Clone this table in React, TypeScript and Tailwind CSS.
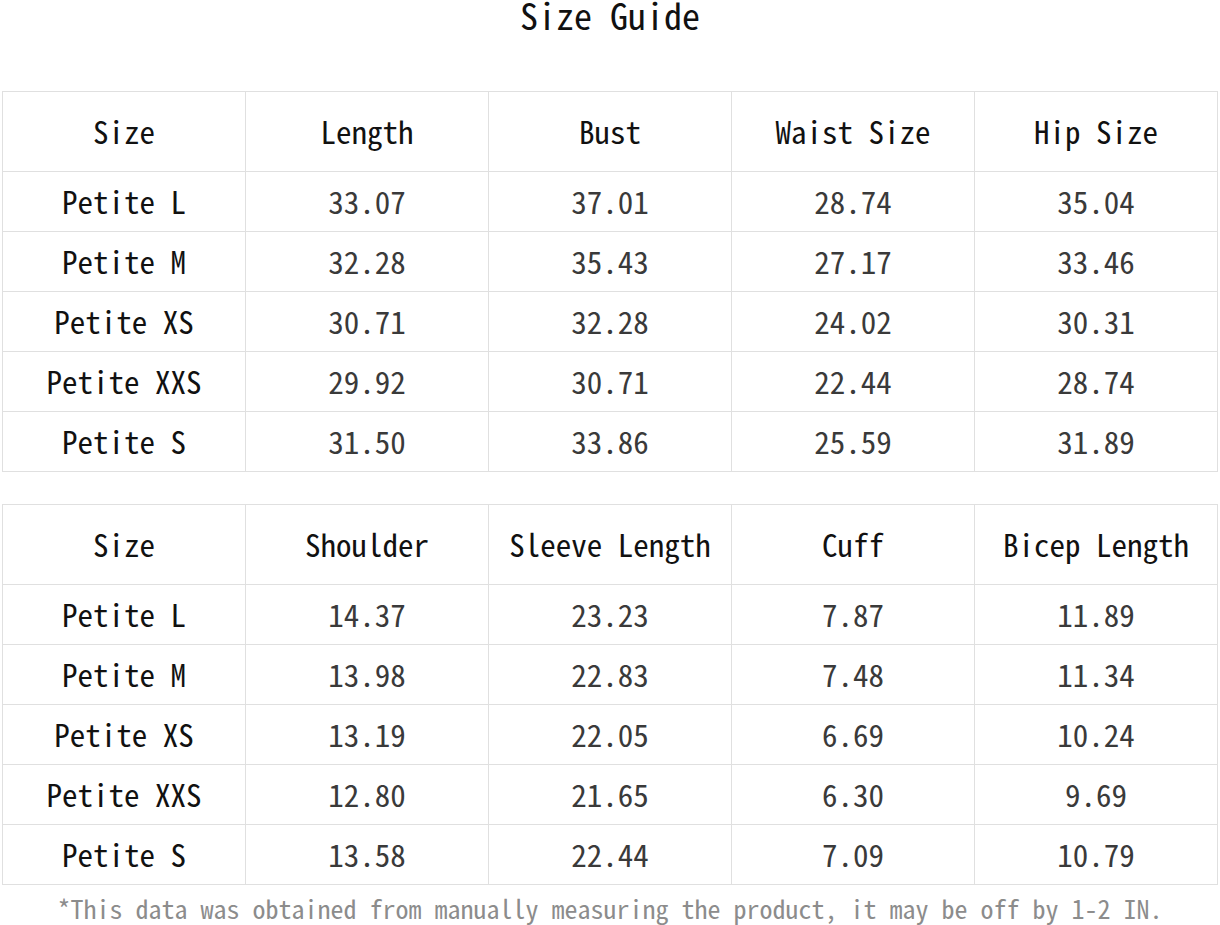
import React from 'react';

const font = { fontFamily: '"Noto Sans Mono CJK SC", "Liberation Mono", monospace' };

const measures = [
  {
    headers: ['Size', 'Length', 'Bust', 'Waist Size', 'Hip Size'],
    rows: [
      ['Petite L', '33.07', '37.01', '28.74', '35.04'],
      ['Petite M', '32.28', '35.43', '27.17', '33.46'],
      ['Petite XS', '30.71', '32.28', '24.02', '30.31'],
      ['Petite XXS', '29.92', '30.71', '22.44', '28.74'],
      ['Petite S', '31.50', '33.86', '25.59', '31.89'],
    ],
  },
  {
    headers: ['Size', 'Shoulder', 'Sleeve Length', 'Cuff', 'Bicep Length'],
    rows: [
      ['Petite L', '14.37', '23.23', '7.87', '11.89'],
      ['Petite M', '13.98', '22.83', '7.48', '11.34'],
      ['Petite XS', '13.19', '22.05', '6.69', '10.24'],
      ['Petite XXS', '12.80', '21.65', '6.30', '9.69'],
      ['Petite S', '13.58', '22.44', '7.09', '10.79'],
    ],
  },
];

const SizeTable: React.FC<{ headers: string[]; rows: string[][] }> = ({ headers, rows }) => (
  <table className="ml-[2px] w-[1216px] table-fixed border-collapse">
    <thead>
      <tr className="h-[80px]">
        {headers.map((h) => (
          <th key={h} className="border border-[#e0e0e0] text-center text-[31px] font-medium text-[#111111]">
            {h}
          </th>
        ))}
      </tr>
    </thead>
    <tbody>
      {rows.map((row) => (
        <tr key={row[0]} className="h-[60px]">
          {row.map((cell, i) => (
            <td
              key={i}
              className={`border border-[#e0e0e0] text-center text-[31px] ${
                i === 0 ? 'font-medium text-[#111111]' : 'font-normal text-[#3a3a3a]'
              }`}
            >
              {cell}
            </td>
          ))}
        </tr>
      ))}
    </tbody>
  </table>
);

export default function App() {
  return (
    <div className="w-[1220px] h-[925px] bg-white overflow-hidden" style={font}>
      <h1 className="h-[27px] pt-[1px] text-center text-[36px] leading-[26px] font-medium text-[#111111]">Size Guide</h1>
      <div className="mt-[64px]">
        <SizeTable headers={measures[0].headers} rows={measures[0].rows} />
      </div>
      <div className="mt-[32px]">
        <SizeTable headers={measures[1].headers} rows={measures[1].rows} />
      </div>
      <p className="mt-[10px] text-center text-[26px] leading-[26px] text-[#8c8c8c]">
        *This data was obtained from manually measuring the product, it may be off by 1-2 IN.
      </p>
    </div>
  );
}
